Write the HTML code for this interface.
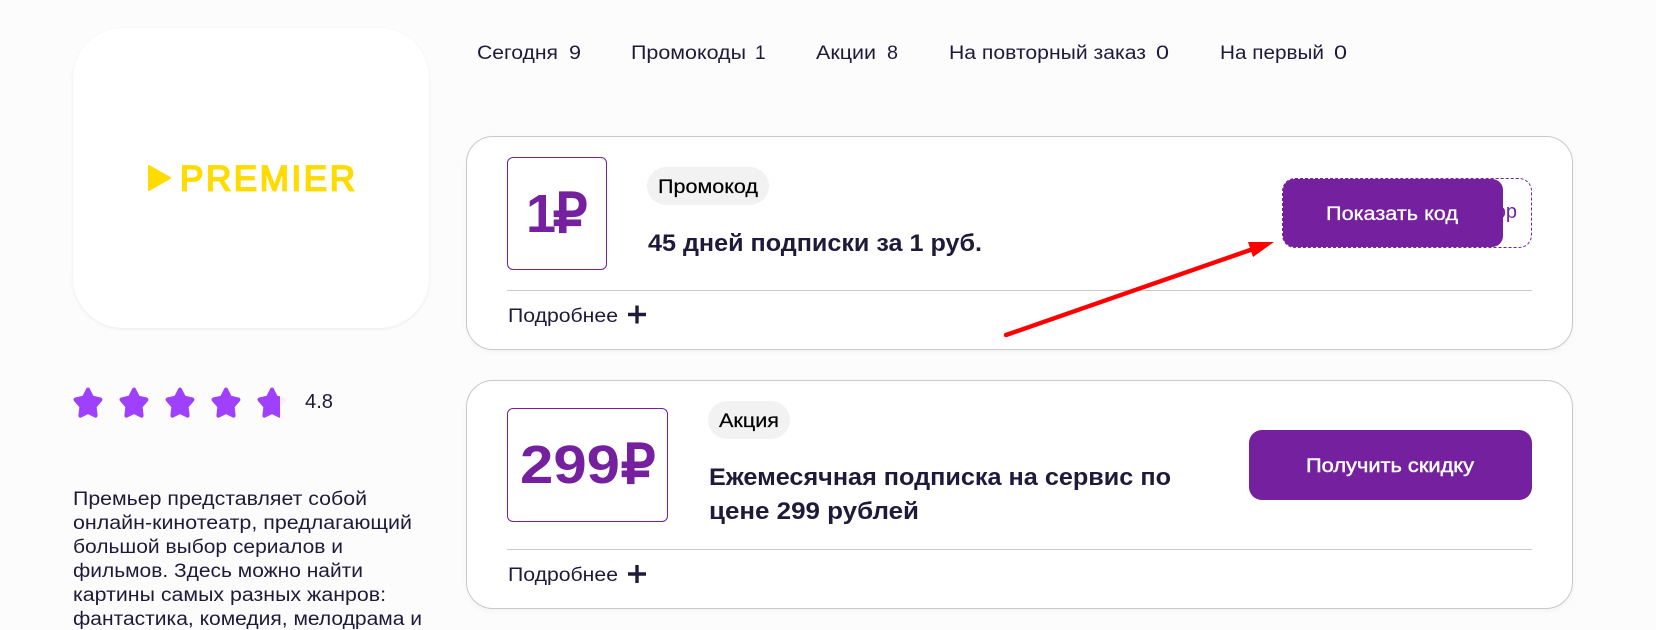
<!DOCTYPE html>
<html lang="ru"><head><meta charset="utf-8"><title>Premier</title>
<style>
html,body{margin:0;padding:0;width:1656px;height:630px;overflow:hidden;background:#fcfcfc}
body{position:relative;font-family:"Liberation Sans",sans-serif}
.a{position:absolute;box-sizing:border-box}
.card{background:#fff;border:1px solid #c9c9c9;border-radius:27px;box-shadow:0 2px 6px rgba(0,0,0,.04)}
.box{border:1px solid #75209e;border-radius:6px;background:#fff}
.pill{background:#f2f2f2;border-radius:19px}
.line{background:#c9c9c9;height:1px}
.btn{background:#75209e;border-radius:13px}
svg{position:absolute;left:0;top:0}
text{font-family:"Liberation Sans",sans-serif;white-space:pre}
.t{font-size:19px;fill:#1f1a3a}
.b{font-weight:bold}
.r{font-family:"DejaVu Sans",sans-serif;font-weight:normal}
</style></head><body>
<div class="a" style="left:73px;top:28px;width:356px;height:300px;background:#fff;border-radius:50px;box-shadow:0 1px 3px rgba(0,0,0,.07)"></div>
<div class="a card" style="left:466px;top:136px;width:1107px;height:214px"></div>
<div class="a box" style="left:507px;top:157px;width:100px;height:113px"></div>
<div class="a pill" style="left:647px;top:167px;width:122px;height:38px"></div>
<div class="a line" style="left:507px;top:290px;width:1025px"></div>
<div class="a" style="left:1282px;top:178px;width:250px;height:70px;border:1px dashed #75209e;border-radius:13px;background:#fff"></div>
<div class="a" style="left:1470px;top:199px;width:47px;text-align:right;font-size:20px;color:#75209e;white-space:nowrap;line-height:26px">ор</div>
<div class="a btn" style="left:1283px;top:179px;width:220px;height:68px;border-radius:11px"></div>
<div class="a card" style="left:466px;top:380px;width:1107px;height:229px"></div>
<div class="a box" style="left:507px;top:408px;width:161px;height:114px"></div>
<div class="a pill" style="left:708px;top:401px;width:82px;height:38px"></div>
<div class="a line" style="left:507px;top:549px;width:1025px"></div>
<div class="a btn" style="left:1249px;top:430px;width:283px;height:70px"></div>

<svg width="1656" height="630" viewBox="0 0 1656 630" xmlns="http://www.w3.org/2000/svg">
<defs><clipPath id="h"><rect x="255" y="385" width="25" height="36"/></clipPath>
<polygon id="s" points="0,-13 4.1,-5.7 12.4,-4 6.6,2.2 7.6,10.5 0,7 -7.6,10.5 -6.6,2.2 -12.4,-4 -4.1,-5.7" stroke-width="4" stroke-linejoin="round"/></defs>

<polygon points="149,166 170,178 149,190" fill="#ffdb00" stroke="#ffdb00" stroke-width="2" stroke-linejoin="round"/>
<text x="180" y="190.5" font-size="35" fill="#ffdb00" stroke="#ffdb00" stroke-width="1.7" textLength="175" lengthAdjust="spacing">PREMIER</text>

<g fill="#a040ff" stroke="#a040ff">
<use href="#s" transform="translate(88 404) scale(1 1.1)"/>
<use href="#s" transform="translate(134 404) scale(1 1.1)"/>
<use href="#s" transform="translate(180 404) scale(1 1.1)"/>
<use href="#s" transform="translate(226 404) scale(1 1.1)"/>
</g>
<use href="#s" transform="translate(272 404) scale(1 1.1)" fill="#f6f2fb" stroke="#f6f2fb"/>
<g clip-path="url(#h)"><use href="#s" transform="translate(272 404) scale(1 1.1)" fill="#a040ff" stroke="#a040ff"/></g>
<text class="t" x="305" y="408" textLength="28" lengthAdjust="spacingAndGlyphs" style="font-size:20px">4.8</text>

<text class="t" x="73" y="505" textLength="294" lengthAdjust="spacingAndGlyphs">Премьер представляет собой</text>
<text class="t" x="73" y="529" textLength="339" lengthAdjust="spacingAndGlyphs">онлайн-кинотеатр, предлагающий</text>
<text class="t" x="73" y="553" textLength="270" lengthAdjust="spacingAndGlyphs">большой выбор сериалов и</text>
<text class="t" x="73" y="577" textLength="290" lengthAdjust="spacingAndGlyphs">фильмов. Здесь можно найти</text>
<text class="t" x="73" y="601" textLength="313" lengthAdjust="spacingAndGlyphs">картины самых разных жанров:</text>
<text class="t" x="73" y="625" textLength="349" lengthAdjust="spacingAndGlyphs">фантастика, комедия, мелодрама и</text>

<text class="t" x="477" y="59" textLength="81" lengthAdjust="spacingAndGlyphs">Сегодня</text>
<text class="t" x="569" y="59" textLength="12" lengthAdjust="spacingAndGlyphs">9</text>
<text class="t" x="631" y="59" textLength="115" lengthAdjust="spacingAndGlyphs">Промокоды</text>
<text class="t" x="755" y="59">1</text>
<text class="t" x="816" y="59" textLength="60" lengthAdjust="spacingAndGlyphs">Акции</text>
<text class="t" x="887" y="59" textLength="11" lengthAdjust="spacingAndGlyphs">8</text>
<text class="t" x="949" y="59" textLength="197" lengthAdjust="spacingAndGlyphs">На повторный заказ</text>
<text class="t" x="1156" y="59" textLength="13" lengthAdjust="spacingAndGlyphs">0</text>
<text class="t" x="1220" y="59" textLength="104" lengthAdjust="spacingAndGlyphs">На первый</text>
<text class="t" x="1334" y="59" textLength="13" lengthAdjust="spacingAndGlyphs">0</text>

<text x="526" y="232" font-size="54" class="b" fill="#75209e">1</text>
<text x="553" y="232" font-size="54" class="r" fill="#75209e" stroke="#75209e" stroke-width="2.2">₽</text>
<text x="658" y="193" font-size="19" fill="#000" stroke="#000" stroke-width=".2" textLength="100" lengthAdjust="spacingAndGlyphs">Промокод</text>
<text x="648" y="251" font-size="24" class="b" fill="#1f1a3a" textLength="334" lengthAdjust="spacingAndGlyphs">45 дней подписки за 1 руб.</text>
<text class="t" x="508" y="322" textLength="110" lengthAdjust="spacingAndGlyphs">Подробнее</text>
<path d="M628 314.5H646M637 305.5V323.5" stroke="#1f1a3a" stroke-width="3.4" fill="none"/>
<text x="1326" y="220" font-size="19" fill="#fff" stroke="#fff" stroke-width=".3" textLength="132" lengthAdjust="spacingAndGlyphs">Показать код</text>

<line x1="1006" y1="335" x2="1256" y2="248" stroke="#ff0000" stroke-width="4.4" stroke-linecap="round"/>
<polygon points="1274,242 1248,242 1253,257" fill="#ff0000"/>

<text x="520" y="483" font-size="54" class="b" fill="#75209e" textLength="100" lengthAdjust="spacingAndGlyphs">299</text>
<text x="621" y="483" font-size="54" class="r" fill="#75209e" stroke="#75209e" stroke-width="2.2">₽</text>
<text x="719" y="427" font-size="19" fill="#000" stroke="#000" stroke-width=".2" textLength="60" lengthAdjust="spacingAndGlyphs">Акция</text>
<text x="709" y="485" font-size="24" class="b" fill="#1f1a3a" textLength="462" lengthAdjust="spacingAndGlyphs">Ежемесячная подписка на сервис по</text>
<text x="709" y="519" font-size="24" class="b" fill="#1f1a3a" textLength="210" lengthAdjust="spacingAndGlyphs">цене 299 рублей</text>
<text class="t" x="508" y="581" textLength="110" lengthAdjust="spacingAndGlyphs">Подробнее</text>
<path d="M628 574H646M637 565V583" stroke="#1f1a3a" stroke-width="3.4" fill="none"/>
<text x="1306" y="472" font-size="19" fill="#fff" stroke="#fff" stroke-width=".45" textLength="168" lengthAdjust="spacingAndGlyphs">Получить скидку</text>
</svg>
</body></html>
